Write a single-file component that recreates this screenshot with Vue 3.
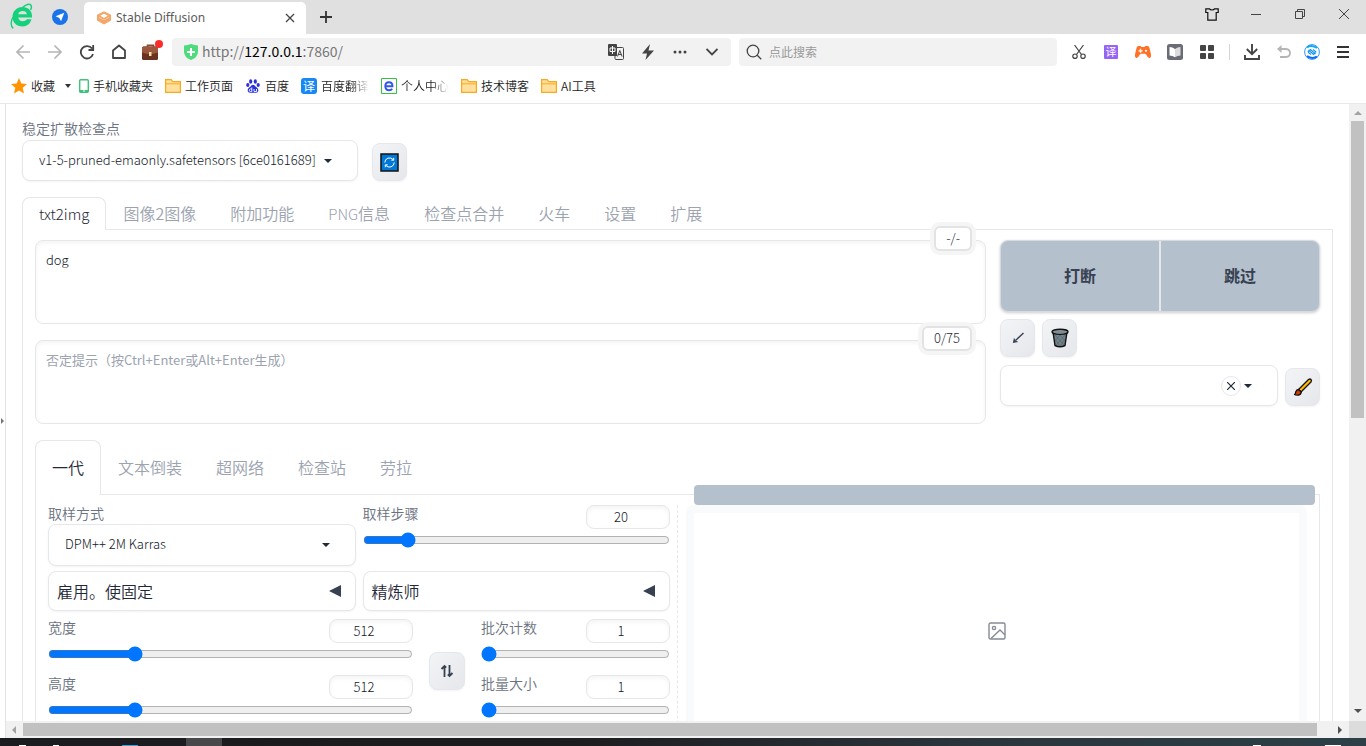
<script setup>
import { ref } from 'vue'

const mainTabs = [
  { id: 'txt2img', latin: 'txt2img', text: '' },
  { id: 'img2img', latin: '', text: '图像2图像' },
  { id: 'extras', latin: '', text: '附加功能' },
  { id: 'pnginfo', latin: 'PNG', text: '信息' },
  { id: 'merger', latin: '', text: '检查点合并' },
  { id: 'train', latin: '', text: '火车' },
  { id: 'settings', latin: '', text: '设置' },
  { id: 'extensions', latin: '', text: '扩展' }
]
const networkTabs = ['一代', '文本倒装', '超网络', '检查站', '劳拉']
const activeMain = ref('txt2img')
const activeNetwork = ref('一代')
const prompt = ref('dog')
const negative = ref('')
const steps = ref(20)
const width = ref(512)
const height = ref(512)
const batchCount = ref(1)
const batchSize = ref(1)
const bookmarks = [
  { icon: 'phone', label: '手机收藏夹' },
  { icon: 'folder', label: '工作页面' },
  { icon: 'baidu', label: '百度' },
  { icon: 'translate', label: '百度翻译', fade: true },
  { icon: 'e', label: '个人中心', fade: true },
  { icon: 'folder', label: '技术博客' },
  { icon: 'folder', label: 'AI工具' }
]
</script>

<template>
  <div class="browser">
    <header class="titlebar">
      <svg class="logo" viewBox="0 0 24 26" width="24" height="26">
        <path d="M22 14.500H8.200c.4 2.400 2 3.700 4.500 3.700 1.900 0 3.300-.6 4.200-1.900h4.600C20.300 20.600 17 23.500 12.600 23.500 6.600 23.500 2.500 19.600 2.500 14S6.600 4 12.300 4c5.900 0 10.300 4 9.700 10.500zM8.200 11.300h8.700c-.4-2-1.900-3.200-4.200-3.200s-4 1.200-4.500 3.200z" fill="#14d27b"/>
        <path d="M3.300 25.300C.6 23.500.4 18.500 3 14M12.500 4.500c3.500-3.200 7-4 8.300-2.500 1 1.300.8 3-.2 5" fill="none" stroke="#14d27b" stroke-width="1.400"/>
      </svg>
      <svg class="compass" viewBox="0 0 16 16" width="16" height="16">
        <circle cx="8" cy="8" r="8" fill="#1a73e8"/><path d="M12.300 3.700 9 12.300 7.300 8.900 3.600 7.200z" fill="#fff"/>
      </svg>
      <div class="page-tab">
        <svg viewBox="0 0 14 14" width="14" height="14" fill="none" stroke="#f5a666" stroke-width="2" stroke-linejoin="round">
          <path d="M7 1.500 13 4.500 7 8 1 4.500z"/><path d="M1 5v4l6 3.500L13 9V5M1.500 7.500 7 10.500l5.500-3"/>
        </svg>
        <span class="page-title">Stable Diffusion</span>
        <button class="plain" aria-label="关闭标签页">
          <svg viewBox="0 0 10 10" width="10" height="10" stroke="#444" stroke-width="1.300"><path d="m1 1 8 8M9 1 1 9"/></svg>
        </button>
      </div>
      <button class="plain new-tab" aria-label="新标签页">
        <svg viewBox="0 0 12 12" width="12" height="12" stroke="#333" stroke-width="1.800"><path d="M6 0v12M0 6h12"/></svg>
      </button>
      <div class="window-buttons">
        <button class="plain" aria-label="皮肤">
          <svg viewBox="0 0 14 13" width="14" height="13" fill="none" stroke="#111" stroke-width="1.200"><path d="M4.500.8h-3.700v3.700h2v7.700h8.400V4.500h2V.8H9.500C9 2.400 5 2.400 4.500.8z"/></svg>
        </button>
        <button class="plain" aria-label="最小化">
          <svg viewBox="0 0 10 10" width="10" height="10" stroke="#444"><path d="M0 5.500h10"/></svg>
        </button>
        <button class="plain" aria-label="还原">
          <svg viewBox="0 0 10 10" width="10" height="10" fill="none" stroke="#444"><path d="M.5 2.500h7v7h-7zM2.500 2.500v-2h7v7h-2"/></svg>
        </button>
        <button class="plain" aria-label="关闭">
          <svg viewBox="0 0 10 10" width="10" height="10" stroke="#444"><path d="m0 0 10 10M10 0 0 10"/></svg>
        </button>
      </div>
    </header>

    <nav class="toolbar">
      <div class="nav-buttons">
        <button class="plain" aria-label="后退">
          <svg viewBox="0 0 16 16" width="16" height="16" fill="none" stroke="#b5b5b5" stroke-width="1.700"><path d="M15 8H2M8.500 1.500 2 8l6.500 6.500"/></svg>
        </button>
        <button class="plain" aria-label="前进">
          <svg viewBox="0 0 16 16" width="16" height="16" fill="none" stroke="#b5b5b5" stroke-width="1.700"><path d="M1 8h13M7.500 1.500 14 8l-6.500 6.500"/></svg>
        </button>
        <button class="plain" aria-label="刷新">
          <svg viewBox="0 0 16 16" width="16" height="16" fill="none" stroke="#444" stroke-width="1.800"><path d="M13 4.500A6.200 6.200 0 1 0 14 10M14.200 1v5H9.500"/></svg>
        </button>
        <button class="plain" aria-label="主页">
          <svg viewBox="0 0 16 16" width="16" height="16" fill="none" stroke="#444" stroke-width="1.800" stroke-linejoin="round"><path d="M2 6.500 8 1.500l6 5V14H2z"/></svg>
        </button>
        <button class="plain" aria-label="工具箱">
          <svg viewBox="0 0 24 24" width="24" height="24">
            <path d="M8.500 8V5.200h6V8" fill="none" stroke="#8a4a32" stroke-width="1.600"/>
            <rect x="3" y="6.500" width="16" height="13.500" rx="1.500" fill="#6a3220"/><path d="M3 8Q3 6.500 4.500 6.500h13Q19 6.500 19 8v4.500q-8 3-16 0z" fill="#9a583e"/>
            <rect x="10" y="12" width="2.500" height="4" fill="#f5dfa5"/><circle cx="20" cy="4" r="4" fill="#fb2c2c"/>
          </svg>
        </button>
      </div>
      <div class="field address">
        <svg viewBox="0 0 16 16" width="16" height="16"><path d="M8 0q3.500 1.300 7 1.500V8q0 5-7 8-7-3-7-8V1.500Q4.500 1.300 8 0z" fill="#4ddb7c"/><path d="M8 4v8M4 8h8" stroke="#fff" stroke-width="2"/></svg>
        <span class="url">http://<b>127.0.0.1</b>:7860/</span>
        <button class="plain" aria-label="翻译">
          <svg viewBox="0 0 16 16" width="16" height="16"><path d="M1 0h7q1 0 1 1v11H1q-1 0-1-1V1q0-1 1-1z" fill="#444"/><path d="M2 4h5v3.500H2zM4.500 2v8" fill="none" stroke="#fff"/><path d="M9 3.500h5.500q1 0 1 1v10q0 1-1 1H8q-1 0-1-1V12" fill="none" stroke="#444"/><path d="m9.500 12.500 2.300-6 2.300 6M10.200 10.500h3" fill="none" stroke="#444"/></svg>
        </button>
        <button class="plain" aria-label="加速">
          <svg viewBox="0 0 16 16" width="16" height="16"><path d="M10 0 2 9.500h5L5.500 16 14 6.500H8.500z" fill="#444"/></svg>
        </button>
        <button class="plain" aria-label="更多">
          <svg viewBox="0 0 14 4" width="14" height="4" fill="#444"><circle cx="2" cy="2" r="1.500"/><circle cx="7" cy="2" r="1.500"/><circle cx="12" cy="2" r="1.500"/></svg>
        </button>
        <button class="plain" aria-label="展开">
          <svg viewBox="0 0 12 8" width="12" height="8" fill="none" stroke="#444" stroke-width="1.800"><path d="m.5 1 5.500 5.500L11.500 1"/></svg>
        </button>
      </div>
      <label class="field search">
        <svg viewBox="0 0 16 16" width="16" height="16" fill="none" stroke="#444" stroke-width="1.300"><circle cx="7" cy="7" r="5.800"/><path d="m11.200 11.200 4 4"/></svg>
        <input type="text" placeholder="点此搜索" aria-label="搜索">
      </label>
      <div class="extensions">
        <button class="plain" aria-label="截图">
          <svg viewBox="0 0 14 14" width="14" height="14" fill="none" stroke="#444" stroke-width="1.200"><path d="m2.500 0 7 9.500M11.500 0l-7 9.500"/><circle cx="3" cy="11.200" r="2.200"/><circle cx="11" cy="11.200" r="2.200"/></svg>
        </button>
        <button class="plain" aria-label="划词翻译"><span class="yi purple">译</span></button>
        <button class="plain" aria-label="游戏">
          <svg viewBox="0 0 16 14" width="16" height="14"><path d="M3.500 1h2l1 1h3l1-1h2q1.500 0 2 2L16 9.500q.4 3-1.500 3.500-1.500.2-3-3l-1.300-1.200H5.800L4.500 10q-1.500 3.200-3 3-1.900-.5-1.500-3.500L1.500 3q.5-2 2-2z" fill="#ff7126"/><path d="M5.500 3.800v4M3.500 5.800h4" stroke="#fff" stroke-width="1.300"/><circle cx="11" cy="5.800" r="1.100" fill="#fff"/></svg>
        </button>
        <button class="plain" aria-label="阅读">
          <svg viewBox="0 0 16 16" width="16" height="16"><rect width="16" height="16" rx="2.500" fill="#696c75"/><path d="M2.500 3q3 0 5.500 2v8.200q-2.500-1.700-5.500-1.700z" fill="#fff"/><path d="M13.500 3q-3 0-5.500 2v8.200q2.500-1.700 5.500-1.700z" fill="#dcdcdc"/></svg>
        </button>
        <button class="plain" aria-label="扩展程序">
          <svg viewBox="0 0 14 14" width="14" height="14" fill="#444"><rect width="6" height="6" rx="1"/><rect x="8" width="6" height="6" rx="1"/><rect y="8" width="6" height="6" rx="1"/><rect x="8" y="8" width="6" height="6" rx="1"/></svg>
        </button>
        <i class="divider"></i>
        <button class="plain" aria-label="下载">
          <svg viewBox="0 0 16 16" width="16" height="16" fill="none" stroke="#444" stroke-width="1.900"><path d="M8 0v10M2.800 5 8 10.200 13.200 5M1 11v4h14v-4"/></svg>
        </button>
        <button class="plain" aria-label="撤销">
          <svg viewBox="0 0 14 14" width="14" height="14"><path d="M3 4h6q4 .3 4 4t-4 4H3" fill="none" stroke="#b5b5b5" stroke-width="1.800"/><path d="M0 4 4.500 0v8z" fill="#b5b5b5"/></svg>
        </button>
        <button class="plain narrow" aria-label="账号">
          <svg viewBox="0 0 16 16" width="16" height="16" fill="none"><circle cx="8" cy="8" r="7.400" fill="#fff" stroke="#3496fa"/><path d="M3 3.300Q7.500.5 13 3.800" stroke="#13a9ee" stroke-width="2"/><path d="M13 12.700Q8.500 15.500 3 12.200" stroke="#0a6cf5" stroke-width="2"/><path d="m3.800 8 2.700-2.500 5 4.500M12.200 8 9.500 10.500l-5-4.500M9 5.500 12.200 8M7 10.500 3.800 8" stroke="#1595f0" stroke-width="1.100"/></svg>
        </button>
        <button class="plain wide" aria-label="菜单">
          <svg viewBox="0 0 12 12" width="12" height="12" stroke="#333" stroke-width="1.800"><path d="M0 1h12M0 6h12M0 11h12"/></svg>
        </button>
      </div>
    </nav>

    <nav class="bookmarks">
      <a href="#" class="bookmark">
        <svg viewBox="0 0 16 16" width="16" height="16"><path d="m8 0 2.300 5.400 5.700.5-4.300 3.900 1.300 5.700L8 12.500l-5 3 1.300-5.700L0 5.900l5.700-.5z" fill="#ff9300"/></svg>
        <span>收藏</span>
      </a>
      <svg class="fav-caret" viewBox="0 0 6 4" width="6" height="4"><path d="M0 0h6L3 4z" fill="#333"/></svg>
      <a v-for="mark in bookmarks" :key="mark.label" href="#" class="bookmark">
        <svg v-if="mark.icon === 'phone'" viewBox="0 0 10 14" width="10" height="14"><rect x=".7" y=".7" width="8.600" height="12.600" rx="1" fill="#fff" stroke="#3fc27a" stroke-width="1.400"/><path d="M1 11h8v2H1z" fill="#3fc27a"/><path d="M4 12h2" stroke="#fff"/></svg>
        <svg v-else-if="mark.icon === 'folder'" viewBox="0 0 16 14" width="16" height="14"><path d="M.6.6h5.500l1.700 2h7.600v10.800H.6z" fill="#ffe09c" stroke="#fba81f" stroke-width="1.200"/><path d="M.6 4.800h14.800" stroke="#fba81f"/></svg>
        <svg v-else-if="mark.icon === 'baidu'" viewBox="0 0 16 16" width="16" height="16" fill="#2a31dc"><ellipse cx="5.700" cy="3.500" rx="1.600" ry="2.200"/><ellipse cx="10.300" cy="3.500" rx="1.600" ry="2.200"/><ellipse cx="2.800" cy="7" rx="1.600" ry="2"/><ellipse cx="13.200" cy="7" rx="1.600" ry="2"/><path d="M8 6.700q1.500 0 2.500 1.800 3.300 2 2.800 4.200-.5 2.400-2.800 2.100h-5q-2.300.3-2.800-2.100-.5-2.200 2.800-4.200 1-1.800 2.500-1.800z"/><path d="M6.800 9.500v4H5.500q-2-.2-1-2 .8-.8 2.300-.5M9 11v2.500h2.500V11" fill="none" stroke="#fff" stroke-width=".9"/></svg>
        <span v-else-if="mark.icon === 'translate'" class="yi">译</span>
        <svg v-else viewBox="0 0 16 16" width="16" height="16" fill="none"><path d="M.5.500h15v15H.5z" stroke="#35c33a"/><path d="M4.300 8.200h7.200C11.500 5.600 10 4.200 8 4.200S4.300 5.700 4.300 8.200 6 12.200 8.200 12.200q2 0 3-1.500" stroke="#3156ea" stroke-width="1.900"/></svg>
        <span :class="{ fade: mark.fade }">{{ mark.label }}</span>
      </a>
    </nav>

    <div class="viewport">
      <aside class="side-handle"><svg viewBox="0 0 4 6" width="4" height="6"><path d="m1 0 3 3-3 3z" fill="#777"/></svg></aside>
      <main class="page">
        <label class="caption" for="checkpoint">稳定扩散检查点</label>
        <div class="quick-row">
          <div class="select-box checkpoint">
            <select id="checkpoint"><option>v1-5-pruned-emaonly.safetensors [6ce0161689]</option></select>
            <svg class="caret" viewBox="0 0 8 4" width="8" height="4"><path d="M0 0h8L4 4z"/></svg>
          </div>
          <button class="tool" aria-label="刷新模型">
            <svg viewBox="0 0 19 19" width="19" height="19"><path d="M1 1h17v17H1z" fill="#0078d7" stroke="#111" stroke-width="1.500"/><path d="M4.800 9.500a4.700 4.700 0 0 1 8.400-2.800M14.200 9.500a4.700 4.700 0 0 1-8.400 2.800M13.700 4.800v2.400h-2.400M5.300 14.200v-2.400h2.400" fill="none" stroke="#fff"/></svg>
          </button>
        </div>

        <div class="tabs" role="tablist">
          <button v-for="tab in mainTabs" :key="tab.id" role="tab" :class="{ active: tab.id === activeMain }" @click="activeMain = tab.id"><span v-if="tab.latin" class="latin">{{ tab.latin }}</span>{{ tab.text }}</button>
        </div>
        <section class="panel">
          <div class="top-row">
            <div class="prompts">
              <div class="prompt">
                <textarea v-model="prompt" aria-label="提示"></textarea>
                <span class="counter">-/-</span>
              </div>
              <div class="prompt">
                <textarea v-model="negative" aria-label="否定提示" placeholder="否定提示（按Ctrl+Enter或Alt+Enter生成）"></textarea>
                <span class="counter">0/75</span>
              </div>
            </div>
            <div class="actions">
              <div class="generate"><button>打断</button><button>跳过</button></div>
              <div class="tool-row">
                <button class="tool" aria-label="读取参数">
                  <svg viewBox="0 0 12 12" width="12" height="12"><path d="M11.500 1 3.500 8.500" stroke="#374151" stroke-width="1.400"/><path d="M.8 11 2 5.800l1.500 2.700 2.800 1.500z" fill="#374151"/></svg>
                </button>
                <button class="tool" aria-label="清除提示">
                  <svg viewBox="0 0 18 20" width="18" height="20"><path d="m2 4 2 13.500q5 2.500 10 0L16 4z" fill="#75838b" stroke="#111" stroke-width="1.400"/><path d="m4 7 9 10M8 6l6 7M3.800 11l5 6.500M14.200 7l-9 10M10 6l-6 7M14 11l-4.500 6.500" stroke="#4f5c63" stroke-width=".6"/><ellipse cx="9" cy="3.800" rx="8" ry="2.600" fill="#8a989f" stroke="#111" stroke-width="1.400"/><ellipse cx="9" cy="4.200" rx="5.500" ry="1.200" fill="#7d8b93"/></svg>
                </button>
              </div>
              <div class="style-row">
                <div class="select-box styles">
                  <select aria-label="样式"><option></option></select>
                  <button class="clear" aria-label="清除"><svg viewBox="0 0 8 8" width="8" height="8" stroke="#1f2937" stroke-width="1.200"><path d="m0 0 8 8M8 0 0 8"/></svg></button>
                  <svg class="caret" viewBox="0 0 8 4" width="8" height="4"><path d="M0 0h8L4 4z"/></svg>
                </div>
                <button class="tool" aria-label="编辑样式">
                  <svg viewBox="0 0 20 20" width="20" height="20" stroke="#111" stroke-width="1.300" stroke-linejoin="round"><path d="m5.500 12.500 10-10q1.500-1 2.500 0t0 2.500l-10 10z" fill="#ffb900"/><path d="m5.500 12.500 2.700 2.500q0 2.500-2.700 3-2.500.3-4-.5 1.200-.8 1.200-2.500.8-2.500 2.800-2.500z" fill="#da3b01"/></svg>
                </button>
              </div>
            </div>
          </div>

          <div class="tabs inner" role="tablist">
            <button v-for="tab in networkTabs" :key="tab" role="tab" :class="{ active: tab === activeNetwork }" @click="activeNetwork = tab">{{ tab }}</button>
          </div>
          <section class="panel generation">
            <div class="settings">
              <div class="pair">
                <div class="sampler">
                  <label class="caption" for="sampler">取样方式</label>
                  <div class="select-box">
                    <select id="sampler"><option>DPM++ 2M Karras</option></select>
                    <svg class="caret" viewBox="0 0 8 4" width="8" height="4"><path d="M0 0h8L4 4z"/></svg>
                  </div>
                </div>
                <div class="slider">
                  <label for="steps">取样步骤</label>
                  <input v-model.number="steps" type="number" aria-label="取样步骤数值">
                  <input id="steps" v-model.number="steps" type="range" min="1" max="150">
                </div>
              </div>
              <div class="pair">
                <button class="accordion">雇用。使固定<svg viewBox="0 0 12 12" width="12" height="12"><path d="M0 6 12 0v12z"/></svg></button>
                <button class="accordion">精炼师<svg viewBox="0 0 12 12" width="12" height="12"><path d="M0 6 12 0v12z"/></svg></button>
              </div>
              <div class="dimensions">
                <div class="stack">
                  <div class="slider">
                    <label for="width">宽度</label>
                    <input v-model.number="width" type="number" aria-label="宽度数值">
                    <input id="width" v-model.number="width" type="range" min="64" max="2048" step="8">
                  </div>
                  <div class="slider">
                    <label for="height">高度</label>
                    <input v-model.number="height" type="number" aria-label="高度数值">
                    <input id="height" v-model.number="height" type="range" min="64" max="2048" step="8">
                  </div>
                </div>
                <button class="tool swap" aria-label="交换宽高">
                  <svg viewBox="0 0 14 14" width="14" height="14" fill="none" stroke="#374151" stroke-width="1.800"><path d="M4.500 13V2M1.500 5l3-3 1.700 1.700M9.500 1v11M12.500 9l-3 3-1.700-1.700"/></svg>
                </button>
                <div class="stack">
                  <div class="slider">
                    <label for="count">批次计数</label>
                    <input v-model.number="batchCount" type="number" aria-label="批次计数数值">
                    <input id="count" v-model.number="batchCount" type="range" min="1" max="100">
                  </div>
                  <div class="slider">
                    <label for="size">批量大小</label>
                    <input v-model.number="batchSize" type="number" aria-label="批量大小数值">
                    <input id="size" v-model.number="batchSize" type="range" min="1" max="8">
                  </div>
                </div>
              </div>
            </div>
            <div class="results">
              <div class="progress"></div>
              <div class="gallery">
                <svg viewBox="0 0 18 18" width="18" height="18" fill="none" stroke="#858b96" stroke-width="1.400"><rect x="1" y="1" width="16" height="16" rx="1.500"/><circle cx="6" cy="6" r="1.600"/><path d="M3 16.500 12 8l5 5"/></svg>
              </div>
            </div>
          </section>
        </section>
      </main>
      <div class="scroll vertical">
        <svg viewBox="0 0 8 4" width="8" height="4"><path d="M0 4h8L4 0z" fill="#a3a3a3"/></svg>
        <i class="track"><i class="thumb"></i></i>
        <svg viewBox="0 0 8 4" width="8" height="4"><path d="M0 0h8L4 4z" fill="#505050"/></svg>
      </div>
      <div class="scroll horizontal">
        <svg viewBox="0 0 4 8" width="4" height="8"><path d="M4 0v8L0 4z" fill="#a3a3a3"/></svg>
        <i class="track"><i class="thumb"></i></i>
        <svg viewBox="0 0 4 8" width="4" height="8"><path d="M0 0v8l4-4z" fill="#505050"/></svg>
      </div>
      <div class="corner"></div>
    </div>
    <footer class="taskbar">
      <i class="active-app"></i>
      <i class="mark m1"></i><i class="mark m2"></i><i class="mark m3"></i><i class="mark m4"></i><i class="mark m5"></i>
    </footer>
  </div>
</template>

<style>
body { margin: 0; overflow: hidden; }
</style>

<style scoped>
* { box-sizing: border-box; }
svg { display: block; flex: none; }
button, input, select, textarea { font: inherit; color: inherit; margin: 0; }
.browser { height: 100vh; display: flex; flex-direction: column; background: #fff; color: #1f2937; font: 300 13px/20px "Noto Sans CJK SC", sans-serif; overflow: hidden; }
.plain { display: flex; align-items: center; justify-content: center; padding: 0; border: 0; background: none; }

.titlebar { flex: none; height: 34px; display: flex; align-items: flex-start; padding-left: 10px; background: #e0e0e0; }
.logo { margin-top: 3px; }
.compass { margin: 9px 16px 0 18px; }
.page-tab { display: flex; align-items: center; gap: 5px; width: 222px; height: 32px; margin-top: 2px; padding: 0 11px 0 13px; border-radius: 5px 5px 0 0; background: #fff; }
.page-title { flex: 1; font: 12px/20px "Noto Sans", sans-serif; color: #5c5c5c; }
.new-tab { width: 40px; height: 34px; }
.window-buttons { display: flex; margin-left: auto; }
.window-buttons .plain { width: 44px; height: 28px; }

.toolbar { flex: none; height: 36px; display: flex; align-items: center; padding: 0 4px 0 7px; background: #fff; font-weight: 400; }
.nav-buttons { display: flex; width: 165px; }
.nav-buttons .plain { width: 32px; height: 32px; }
.field { display: flex; align-items: center; height: 28px; border-radius: 4px; background: #f2f2f2; }
.address { flex: 1; padding: 0 3px 0 11px; }
.url { flex: 1; padding: 0 0 2px 3px; font-size: 14px; color: #777; }
.url b { font-weight: inherit; color: #000; }
.address .plain { width: 32px; height: 28px; }
.search { width: 318px; margin: 0 6px 0 8px; padding-left: 7px; gap: 7px; }
.search input { flex: 1; min-width: 0; padding: 0; border: 0; background: none; outline: 0; font-size: 12px; }
.search input::placeholder { color: #999; }
.extensions { display: flex; align-items: center; }
.extensions .plain { width: 32px; height: 32px; }
.extensions .narrow { width: 24px; }
.extensions .wide { width: 38px; }
.divider { width: 1px; height: 16px; margin: 0 6px; background: #d5d5d5; }
.yi { width: 16px; height: 16px; border-radius: 3px; background: #1687f5; color: #fff; font-size: 12px; font-weight: 400; line-height: 15px; text-align: center; }
.purple { width: 14px; height: 14px; border-radius: 1px; background: #9563f6; font-size: 11px; line-height: 13px; }

.bookmarks { flex: none; height: 34px; display: flex; align-items: center; gap: 12px; padding: 0 0 1px 11px; border-bottom: 1px solid #e8e8e8; font-size: 12px; font-weight: 350; }
.bookmark { display: flex; align-items: center; gap: 4px; color: #222; text-decoration: none; white-space: nowrap; }
.fav-caret { margin: 0 -4px 0 -2px; }
.fade { -webkit-mask-image: linear-gradient(90deg, #000 65%, transparent); mask-image: linear-gradient(90deg, #000 65%, transparent); }

.viewport { flex: 1; min-height: 0; display: grid; grid-template-columns: 6px minmax(0, 1fr) 17px; grid-template-rows: minmax(0, 1fr) 17px; }
.side-handle { grid-row: 1 / 3; display: flex; align-items: center; border-right: 1px solid #e4e4e4; }
.page { padding: 16px 16px 0; overflow: hidden; }
.caption { display: block; height: 20px; font-size: 14px; font-weight: 350; line-height: 16px; color: #6b7280; }
.quick-row { display: flex; align-items: flex-end; gap: 14px; margin-bottom: 16px; }
.select-box { position: relative; display: flex; align-items: center; height: 41px; border: 1px solid #e5e7eb; border-radius: 8px; background: #fff; box-shadow: 0 1px 2px rgba(0, 0, 0, .05); }
.select-box select { width: 100%; height: 100%; padding: 0 16px 2px; border: 0; border-radius: 8px; background: none; appearance: none; outline: 0; color: #111827; }
.caret { position: absolute; right: 25px; fill: #1f2937; pointer-events: none; }
.checkpoint { width: 336px; }
.tool { flex: none; display: flex; align-items: center; justify-content: center; width: 35px; height: 38px; padding: 0; border: 1px solid #e5e7eb; border-radius: 8px; background: linear-gradient(135deg, #f3f4f6, #e5e7eb); box-shadow: 0 1px 2px rgba(0, 0, 0, .05); }

.tabs { display: flex; height: 33px; border-bottom: 1px solid #e5e7eb; }
.tabs button { height: 33px; padding: 0 16px 2px; border: 1px solid transparent; border-bottom: 0; border-radius: 8px 8px 0 0; background: none; color: #9ca3af; font-size: 16px; font-weight: 350; line-height: 30px; white-space: nowrap; }
.tabs .active { border-color: #e5e7eb; background: #fff; color: #1f2937; }
.latin { font-size: 15px; font-weight: 300; }
.tabs.inner { height: 55px; margin-top: 16px; }
.tabs.inner button { height: 55px; line-height: 52px; }
.panel { border: 1px solid #e5e7eb; border-top: 0; padding: 10px 12px 0; }
.top-row { display: grid; grid-template-columns: minmax(0, 1fr) 320px; gap: 14px; }
.prompts { display: grid; gap: 16px; }
.prompt { position: relative; height: 84px; }
.prompt textarea { display: block; width: 100%; height: 100%; padding: 9px 10px; border: 1px solid #e5e7eb; border-radius: 8px; background: #fff; box-shadow: inset 0 2px 4px rgba(0, 0, 0, .05); resize: none; outline: 0; line-height: 20px; color: #111827; }
.prompt textarea::placeholder { color: #9ca3af; font-weight: 400; }
.counter { position: absolute; top: -14px; right: 14px; height: 25px; padding: 0 10px; border: 2px solid #e2e3e5; border-radius: 6px; background: #fff; box-shadow: 0 0 0 4px #f5f5f5; line-height: 20px; color: #1f2937; }
.generate { display: grid; grid-template-columns: 1fr 1fr; gap: 2px; height: 72px; border: 1px solid #d5dae0; border-radius: 8px; background: #e5e7eb; box-shadow: 0 1px 3px rgba(0, 0, 0, .2); overflow: hidden; }
.generate button { padding: 0 0 2px; border: 0; background: #b4c0cc; color: #374151; font-size: 16px; font-weight: 600; }
.tool-row { display: flex; gap: 7px; margin: 7px 0; }
.style-row { display: flex; gap: 7px; align-items: flex-end; }
.styles { flex: 1; margin-top: 1px; }
.clear { position: absolute; right: 36px; display: flex; align-items: center; justify-content: center; width: 20px; height: 20px; padding: 0; border: 1px solid #e5e7eb; border-radius: 50%; background: #fff; }

.generation { display: grid; grid-template-columns: minmax(0, 622fr) minmax(0, 621fr); gap: 16px; height: 400px; }
.settings { position: relative; display: flex; flex-direction: column; }
.settings::after { content: ""; position: absolute; top: 0; bottom: 0; right: -8px; border-left: 1px dashed #e5e7eb; }
.pair { display: grid; grid-template-columns: 1fr 1fr; gap: 7px; margin-bottom: 5px; }
.sampler .caption { height: 19px; }
.sampler .select-box { height: 42px; }
.slider { display: grid; grid-template-columns: minmax(0, 1fr) 84px; align-content: start; }
.slider label { font-size: 14px; font-weight: 350; line-height: 16px; color: #6b7280; }
.slider input[type="number"] { width: 84px; height: 24px; padding: 0 14px 1px 0; border: 1px solid #e5e7eb; border-radius: 8px; background: #fff; box-shadow: inset 0 2px 4px rgba(0, 0, 0, .05); color: #111827; text-align: center; appearance: textfield; -moz-appearance: textfield; outline: 0; }
.slider input[type="number"]::-webkit-inner-spin-button { appearance: none; margin: 0; }
.slider input[type="range"] { grid-column: 1 / 3; width: 100%; height: 16px; margin: 3px 0 0; }
.accordion { display: flex; align-items: center; justify-content: space-between; height: 40px; padding: 0 14px 1px 8px; border: 1px solid #e5e7eb; border-radius: 8px; background: #fff; box-shadow: 0 1px 2px rgba(0, 0, 0, .05); color: #1f2937; font-size: 16px; font-weight: 350; }
.accordion svg { fill: #374151; }
.dimensions { display: grid; grid-template-columns: minmax(0, 365fr) 36px minmax(0, 189fr); gap: 16px; margin-top: 3px; }
.stack { display: grid; gap: 13px; align-content: start; }
.swap { width: 36px; margin-top: 33px; }
.results { position: relative; }
.progress { position: absolute; left: 8px; right: -8px; top: -20px; height: 20px; border-radius: 4px; background: #b4c0cc; }
.gallery { display: flex; justify-content: center; height: 300px; padding-top: 109px; border: 8px solid #f9fafb; border-bottom: 0; border-radius: 8px 8px 0 0; background: #fff; }

.scroll { display: flex; align-items: center; justify-content: space-between; background: #f1f1f1; }
.scroll .track { flex: 1; align-self: stretch; }
.scroll .thumb { display: block; background: #c1c1c1; }
.vertical { flex-direction: column; padding: 7px 0 8px; }
.vertical .track { margin: 6px 2px; }
.vertical .thumb { height: 51%; }
.horizontal { padding: 0 7px 0 6px; }
.horizontal .track { margin: 2px 21px 2px 7px; }
.horizontal .thumb { height: 100%; }
.corner { background: #dcdcdc; }
.taskbar { position: relative; flex: none; height: 8px; background: linear-gradient(90deg, #1b1c20, #1c1b1d 40%, #2b343b 70%, #2d4047); overflow: hidden; }
.active-app { position: absolute; left: 186px; width: 36px; height: 8px; background: #48484a; }
.mark { position: absolute; bottom: 0; height: 1px; background: #fff; }
.m1 { left: 19px; width: 7px; }
.m2 { left: 53px; width: 6px; }
.m3 { left: 122px; width: 16px; background: #35a4dc; }
.m4 { right: 105px; width: 8px; }
.m5 { right: 25px; width: 16px; }
</style>
